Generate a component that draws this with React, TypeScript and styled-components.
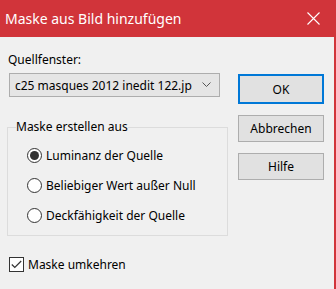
import styled, { createGlobalStyle } from "styled-components";

const GlobalStyle = createGlobalStyle`
  html, body {
    margin: 0;
    padding: 0;
    background: #f0f0f0;
  }
  body {
    font-family: "Noto Sans", "Open Sans", sans-serif;
  }
`;

const Window = styled.div`
  width: 336px;
  height: 289px;
  box-sizing: border-box;
  background: #f0f0f0;
  border-right: 2px solid #d1343a;
  display: flex;
  flex-direction: column;
  overflow: hidden;
`;

const TitleBar = styled.div`
  height: 37px;
  flex-shrink: 0;
  background: #d1343a;
  color: #fff;
  display: flex;
  align-items: center;
  justify-content: space-between;
  padding: 0 14px 0 5px;
  font-size: 14px;
`;

const CloseButton = styled.svg`
  width: 13px;
  height: 13px;
`;

const Body = styled.div`
  display: flex;
  flex: 1;
`;

const LeftColumn = styled.div`
  width: 229px;
  display: flex;
  flex-direction: column;
  font-size: 12px;
  color: #000;
`;

const Label = styled.div`
  margin: 14px 0 0 8px;
  line-height: 18px;
`;

const Combo = styled.div`
  margin: 4px 0 0 9px;
  width: 211px;
  height: 24px;
  box-sizing: border-box;
  border: 1px solid #adadad;
  background: #e5e5e5;
  display: flex;
  align-items: center;
  justify-content: space-between;
  padding: 0 8px 0 5px;
`;

const Chevron = styled.svg`
  width: 9px;
  height: 6px;
`;

const Group = styled.fieldset`
  margin: 22px 0 0 7px;
  width: 221px;
  box-sizing: border-box;
  border: 1px solid #dcdcdc;
  padding: 5px 0 5px 8px;
`;

const Legend = styled.legend`
  padding: 0;
  line-height: 16px;
`;

const RadioRow = styled.label`
  display: flex;
  align-items: center;
  height: 30px;
  margin-left: 11px;
  gap: 4px;
`;

const RadioCircle = styled.span<{ checked?: boolean }>`
  width: 15px;
  height: 15px;
  box-sizing: border-box;
  border-radius: 50%;
  border: 1px solid #333;
  background: #fff;
  display: flex;
  align-items: center;
  justify-content: center;
  &::after {
    content: "";
    display: ${(p) => (p.checked ? "block" : "none")};
    width: 9px;
    height: 9px;
    border-radius: 50%;
    background: #333;
  }
`;

const CheckRow = styled.label`
  display: flex;
  align-items: center;
  gap: 4px;
  margin: 20px 0 0 9px;
  height: 16px;
`;

const CheckBox = styled.span`
  width: 15px;
  height: 15px;
  box-sizing: border-box;
  border: 1px solid #333;
  background: #fff;
  display: flex;
  align-items: center;
  justify-content: center;
`;

const RightColumn = styled.div`
  display: flex;
  flex-direction: column;
  gap: 11px;
  margin: 37px 0 0 9px;
`;

const Button = styled.button<{ primary?: boolean }>`
  width: 86px;
  height: ${(p) => (p.primary ? "30px" : "27px")};
  box-sizing: border-box;
  background: #e1e1e1;
  border: ${(p) => (p.primary ? "2px solid #0078d7" : "1px solid #adadad")};
  font-family: inherit;
  font-size: 12px;
  color: #000;
  padding: 0;
`;

export default function App() {
  return (
    <>
      <GlobalStyle />
      <Window>
        <TitleBar>
          <span>Maske aus Bild hinzufügen</span>
          <CloseButton viewBox="0 0 13 13">
            <path d="M0.5 0.5 L12.5 12.5 M12.5 0.5 L0.5 12.5" stroke="#fff" strokeWidth="1.1" />
          </CloseButton>
        </TitleBar>
        <Body>
          <LeftColumn>
            <Label>Quellfenster:</Label>
            <Combo>
              <span>c25 masques 2012 inedit 122.jp</span>
              <Chevron viewBox="0 0 9 6">
                <path d="M0.5 0.5 L4.5 4.5 L8.5 0.5" fill="none" stroke="#555" strokeWidth="1" />
              </Chevron>
            </Combo>
            <Group>
              <Legend>Maske erstellen aus</Legend>
              <RadioRow>
                <RadioCircle checked />
                Luminanz der Quelle
              </RadioRow>
              <RadioRow>
                <RadioCircle />
                Beliebiger Wert außer Null
              </RadioRow>
              <RadioRow>
                <RadioCircle />
                Deckfähigkeit der Quelle
              </RadioRow>
            </Group>
            <CheckRow>
              <CheckBox>
                <svg width="11" height="9" viewBox="0 0 11 9">
                  <path d="M0.8 4.5 L3.8 7.5 L10.2 1" fill="none" stroke="#333" strokeWidth="1.2" />
                </svg>
              </CheckBox>
              Maske umkehren
            </CheckRow>
          </LeftColumn>
          <RightColumn>
            <Button primary>OK</Button>
            <Button>Abbrechen</Button>
            <Button>Hilfe</Button>
          </RightColumn>
        </Body>
      </Window>
    </>
  );
}
